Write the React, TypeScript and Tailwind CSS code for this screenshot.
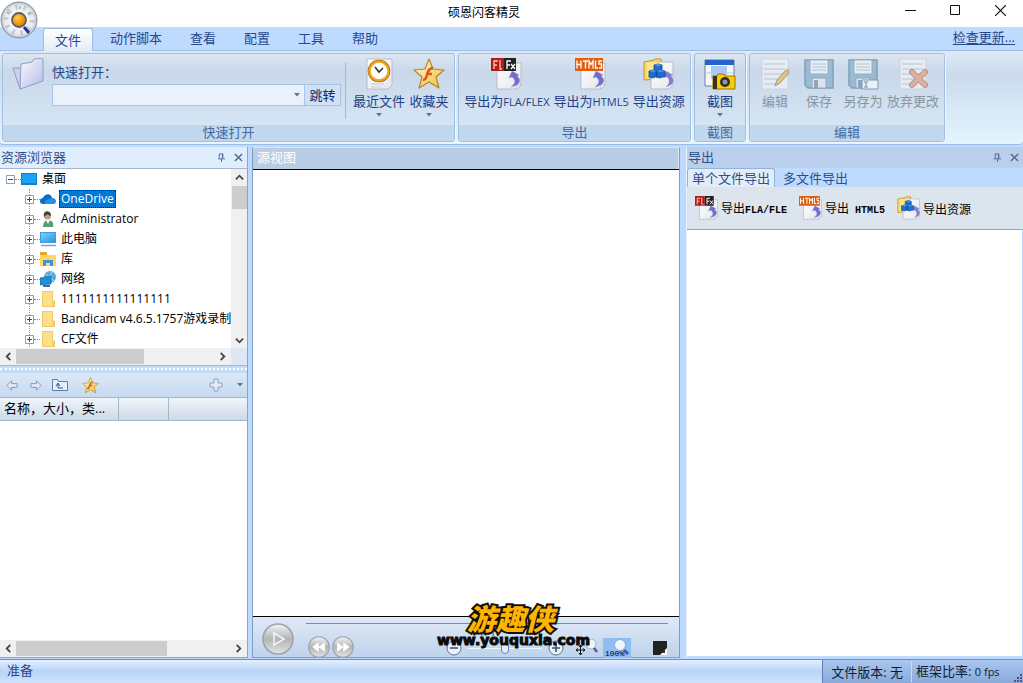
import React from "react";

type IconProps = { className?: string };

const PageShape = () => (
  <>
    <path d="M6 5h24v22l-4 4H6z" fill="url(#paper)" stroke="#b9bcc4" />
    <path d="M30 27h-4v4z" fill="#fff" stroke="#a9adb5" strokeWidth=".7" />
  </>
);

const SwirlArrow = () => (
  <path d="M18 20l3-7 7 4-2 1c5 4 3 9-6 11 5-4 5-7 1-10z" fill="#6f6bc6" stroke="#9d99e2" strokeWidth=".6" />
);

const Defs = () => (
  <svg className="absolute size-0" aria-hidden="true">
    <defs>
      <linearGradient id="paper" x1="0" y1="0" x2="1" y2="1">
        <stop offset="0" stopColor="#fff" />
        <stop offset="1" stopColor="#e4e6ec" />
      </linearGradient>
      <linearGradient id="folder" x1="0" y1="0" x2="1" y2="1">
        <stop offset="0" stopColor="#fafbff" />
        <stop offset="1" stopColor="#b4bae4" />
      </linearGradient>
      <linearGradient id="gold" x1="0" y1="0" x2="1" y2="1">
        <stop offset="0" stopColor="#fffbd0" />
        <stop offset="1" stopColor="#f2bd3c" />
      </linearGradient>
      <linearGradient id="silver" x1="0" y1="0" x2="0" y2="1">
        <stop offset="0" stopColor="#f4f4f4" />
        <stop offset=".5" stopColor="#b2b4b6" />
        <stop offset="1" stopColor="#e2e4e6" />
      </linearGradient>
      <linearGradient id="screen" x1="0" y1="0" x2="1" y2="1">
        <stop offset="0" stopColor="#7fd0fb" />
        <stop offset="1" stopColor="#2696e0" />
      </linearGradient>
      <radialGradient id="orb">
        <stop offset="0" stopColor="#fff" />
        <stop offset=".8" stopColor="#e8ebef" />
        <stop offset="1" stopColor="#b4bcc9" />
      </radialGradient>
      <radialGradient id="amber" cx=".4" cy=".35">
        <stop offset="0" stopColor="#ffd04a" />
        <stop offset="1" stopColor="#f08c00" />
      </radialGradient>
    </defs>
  </svg>
);

const AppLogo = ({ className }: IconProps) => (
  <svg viewBox="0 0 38 38" className={className}>
    <circle cx="19" cy="19" r="18" fill="url(#orb)" stroke="#8791a3" />
    <circle cx="19" cy="19" r="13" fill="none" stroke="#b3bac5" strokeWidth="5" strokeDasharray="2.500 5.670" opacity=".7" />
    <circle cx="19" cy="19" r="10" fill="#f3f5f7" />
    <path d="M24 26l5 6" stroke="#22329c" strokeWidth="3" />
    <circle cx="19" cy="19" r="7" fill="url(#amber)" stroke="#565d6d" strokeWidth="1.800" />
    <path d="M20 5v3M7 11l2 2M30 11l-2 2" stroke="#8fa274" strokeWidth="1.200" />
  </svg>
);

const FoldersIcon = ({ className }: IconProps) => (
  <svg viewBox="0 0 32 32" className={className}>
    <path d="M1 10h9l4 17-6 4z" fill="#c9d1ee" stroke="#8f9bc4" />
    <path d="M9 6l11-2 2-3 8-1 1 2v21L8 31z" fill="url(#folder)" stroke="#8f9bc4" />
  </svg>
);

const RecentIcon = ({ className }: IconProps) => (
  <svg viewBox="0 0 32 32" className={className}>
    <path d="M4 1h25v26l-4 4H4z" fill="url(#paper)" stroke="#b9bcc4" />
    <path d="M8 26h13M8 29h10" stroke="#c9ccd3" />
    <circle cx="16" cy="13" r="9.500" fill="#fff" stroke="#8a5a10" strokeWidth="3.500" />
    <circle cx="16" cy="13" r="9.500" fill="#fff" stroke="#f3a31a" strokeWidth="2.400" />
    <path d="M12 9l4 5 4-4" fill="none" stroke="#333" strokeWidth="1.600" />
  </svg>
);

const StarIcon = ({ className }: IconProps) => (
  <svg viewBox="0 0 32 32" className={className}>
    <path d="M16 1l4 10 11 1-8 7 3 11-10-6-10 6 3-11-8-7 11-1z" fill="url(#gold)" stroke="#ba8422" strokeWidth="1.200" strokeLinejoin="round" />
    <path d="M20 10c-4 0-5 3-6 7s-2 5-4 5M13 16h6" fill="none" stroke="#e0561a" strokeWidth="2.600" />
  </svg>
);

const FlaIcon = ({ className }: IconProps) => (
  <svg viewBox="0 0 32 32" className={className}>
    <PageShape />
    <SwirlArrow />
    <path d="M0 0h13v13H0z" fill="#b5191c" />
    <path d="M13 0h12v13H13z" fill="#222" />
    <path d="M3 11V3h4M3 7h3M9 2v9h2" fill="none" stroke="#ffc8a8" strokeWidth="1.300" />
    <path d="M16 11V3h4M16 7h3M20 6l4 5M24 6l-4 5" fill="none" stroke="#fff" strokeWidth="1.300" />
  </svg>
);

const HtmlIcon = ({ className }: IconProps) => (
  <svg viewBox="0 0 32 32" className={className}>
    <PageShape />
    <SwirlArrow />
    <path d="M0 0h28v13H0z" fill="#df5f10" />
    <path d="M2 2.500v8M6 2.500v8M2 6.500h4M8 3h5M10.500 3v7.500M14 10.500V3l2 3.500L18 3v7.500M20.500 2.500V10H23M27 3h-3v3h2.500v4H24" fill="none" stroke="#fff" strokeWidth="1.300" />
  </svg>
);

const ResourceIcon = ({ className }: IconProps) => (
  <svg viewBox="0 0 32 32" className={className}>
    <path d="M1 4l10-2 1-1h6v20l-17 1z" fill="#f7d967" stroke="#bf9230" />
    <path d="M8 4h22v23l-4 4H8z" fill="url(#paper)" stroke="#b9bcc4" />
    <path d="M4 4h13v15H4z" fill="#fbe48a" />
    <path d="M20 20l3-7 7 4-2 1c4 4 3 9-5 11 4-4 4-7 1-10z" fill="#817ed0" />
    <path d="M11 7l4-1 4 1v5l-4 2-4-1zM6 13l4-1 4 1v5l-4 2-4-1zM13 13l4-1 5 1v5l-5 2-4-1z" fill="#1e6fd0" stroke="#0e439a" strokeWidth=".8" />
    <path d="M11 7l4 1 4-1-4-1zM6 13l4 1 4-1-4-1zM13 13l4 1 5-1-5-1z" fill="#5a9fe8" />
  </svg>
);

const CaptureIcon = ({ className }: IconProps) => (
  <svg viewBox="0 0 32 32" className={className}>
    <path d="M1 2h29v26H1z" fill="#f4f7fc" stroke="#6d80a4" />
    <path d="M1 2h29v5H1z" fill="#2463c8" />
    <path d="M7 8h16v13H7z" fill="#a9c8f8" />
    <path d="M1 15h28" stroke="#bdc9dc" />
    <path d="M9 18h4l1-2h6l1 2h10v13H9z" fill="#f2cf08" stroke="#a17700" />
    <path d="M9 18h4v13H9z" fill="#3c3414" />
    <circle cx="21" cy="24" r="5" fill="#302d27" />
    <circle cx="21" cy="24" r="2.500" fill="#8b96ac" />
  </svg>
);

const NoteLines = () => (
  <>
    <path d="M3 1h26v30H3z" fill="#edf0f5" stroke="#ccd2db" />
    <path d="M5 6h21M5 11h21M5 16h21M5 21h18M5 26h15" stroke="#b9bec7" strokeWidth="1.200" />
  </>
);

const EditIcon = ({ className }: IconProps) => (
  <svg viewBox="0 0 32 32" className={className}>
    <NoteLines />
    <path d="M16 28l2-6 9-10 3 3-9 10z" fill="#e3c167" stroke="#a08c66" />
    <path d="M27 12l3 3 1-2-2-3z" fill="#d9a3a0" />
  </svg>
);

const FloppyShape = () => (
  <>
    <path d="M2 2h28v28H5l-3-3z" fill="#8fb4cd" stroke="#6c93ae" strokeWidth="1.500" />
    <path d="M7 2h18v14H7z" fill="#edf3f7" stroke="#86a5ba" />
    <path d="M9 6h14M9 9h14M9 12h14" stroke="#a9bcc9" />
    <path d="M9 20h14v10H9z" fill="#e0e8ee" stroke="#7b9fb7" />
    <path d="M11 22h4v8h-4z" fill="#8398a7" />
  </>
);

const SaveIcon = ({ className }: IconProps) => (
  <svg viewBox="0 0 32 32" className={className}><FloppyShape /></svg>
);

const SaveAsIcon = ({ className }: IconProps) => (
  <svg viewBox="0 0 32 32" className={className}>
    <FloppyShape />
    <path d="M15 22h16v9H15z" fill="#f1f6fb" stroke="#698ba5" />
    <path d="M17 24h4M17 29h4M19 24v5" stroke="#677988" />
  </svg>
);

const DiscardIcon = ({ className }: IconProps) => (
  <svg viewBox="0 0 32 32" className={className}>
    <NoteLines />
    <path d="M15 14l13 13M28 14L15 27" stroke="#a98479" strokeWidth="6" strokeLinecap="round" />
    <path d="M15 14l13 13M28 14L15 27" stroke="#e2a58c" strokeWidth="4" strokeLinecap="round" />
  </svg>
);

const PinIcon = () => (
  <svg viewBox="0 0 10 10" className="size-[9px]" fill="none" stroke="#4b6694">
    <path d="M2.500 6V1h4v5M1 6.500h8M5 6.500V10M6 1v5" />
  </svg>
);

const CrossIcon = () => (
  <svg viewBox="0 0 10 10" className="size-[9px]" stroke="#4b6694" strokeWidth="1.500">
    <path d="M1 1l8 8M9 1L1 9" />
  </svg>
);

const Caret = ({ className }: IconProps) => (
  <svg viewBox="0 0 6 4" className={`h-1 w-[6px] ${className ?? ""}`}><path d="M0 0h6L3 3.500z" fill="#66758c" /></svg>
);

const Chevron = ({ d }: { d: string }) => (
  <svg viewBox="0 0 10 10" className="size-[9px]" fill="none" stroke="#464646" strokeWidth="2"><path d={d} /></svg>
);
const UP = "M1 7l4-4 4 4";
const DOWN = "M1 3l4 4 4-4";
const LEFT = "M7 1L3 5l4 4";
const RIGHT = "M3 1l4 4-4 4";

type Tool = { label: string; latin?: string; Icon: (p: IconProps) => React.ReactElement; caret?: boolean; disabled?: boolean };

function ToolButton({ label, latin, Icon, caret, disabled }: Tool) {
  return (
    <button disabled={disabled} className={`flex min-w-10 shrink-0 flex-col items-center whitespace-nowrap pt-1 ${disabled ? "text-[#8a949f]" : "text-[#1e3f86]"}`}>
      <Icon className={`size-8 ${disabled ? "opacity-80" : ""}`} />
      <span className="mt-[3px] leading-4">{label}{latin && <span className="text-[11px]">{latin}</span>}</span>
      {caret && <Caret className="mt-1" />}
    </button>
  );
}

function Group({ title, className = "", children }: { title: string; className?: string; children: React.ReactNode }) {
  return (
    <section className={`flex shrink-0 flex-col overflow-hidden rounded-[3px] border border-[#a3bfdf] bg-linear-to-b from-[#dce6f2] via-[#c9d8ea] via-20% to-[#d9e9f7] shadow-[1px_1px_0_#edf6ff] ${className}`}>
      <div className="flex flex-1 items-start justify-center gap-1 px-[5px]">{children}</div>
      <h2 className="h-4 bg-[#c0d8ef] text-center leading-[15px] text-[#4668a0]">{title}</h2>
    </section>
  );
}

const exportTools: Tool[] = [
  { label: "导出为", latin: "FLA/FLEX", Icon: FlaIcon },
  { label: "导出为", latin: "HTML5", Icon: HtmlIcon },
  { label: "导出资源", Icon: ResourceIcon },
];
const editTools: Tool[] = [
  { label: "编辑", Icon: EditIcon, disabled: true },
  { label: "保存", Icon: SaveIcon, disabled: true },
  { label: "另存为", Icon: SaveAsIcon, disabled: true },
  { label: "放弃更改", Icon: DiscardIcon, disabled: true },
];

function TitleBar() {
  return (
    <header className="flex h-[27px] shrink-0 bg-white pl-[42px]">
      <h1 className="flex-1 pl-[38px] text-center text-xs leading-[25px] text-black">硕恩闪客精灵</h1>
      <button aria-label="最小化" className="flex w-[45px] items-center justify-center pb-[6px]"><svg className="h-3 w-[11px]" viewBox="0 0 11 12" stroke="#111"><path d="M0 5.500h11" /></svg></button>
      <button aria-label="最大化" className="flex w-[45px] items-center justify-center pb-[6px]"><svg className="size-[11px]" viewBox="0 0 11 11" fill="none" stroke="#111"><path d="M.5.5h9v9h-9z" /></svg></button>
      <button aria-label="关闭" className="flex w-[45px] items-center justify-center pb-[6px]"><svg className="size-[11px]" viewBox="0 0 11 11" fill="none" stroke="#111" strokeWidth="1.200"><path d="M0 0l11 11M11 0L0 11" /></svg></button>
    </header>
  );
}

function MenuTabs() {
  return (
    <nav className="flex h-6 shrink-0 items-end border-b border-[#9dbce3] bg-[#bfdaff] pl-[43px] text-[#26488c]">
      <button className="-mb-px h-[23px] rounded-t-[3px] border border-b-0 border-[#9dbce3] bg-linear-to-b from-white to-[#e2edf9] px-[11px] leading-5">文件</button>
      <div className="flex gap-7 pl-[17px] leading-6">
        {["动作脚本", "查看", "配置", "工具", "帮助"].map((t) => <button key={t}>{t}</button>)}
      </div>
      <a href="#update" className="ml-auto self-start pr-2 leading-5 underline underline-offset-2">检查更新...</a>
    </nav>
  );
}

function Ribbon() {
  return (
    <div className="flex h-[94px] shrink-0 gap-[3px] overflow-hidden rounded-b border-b border-[#9dbce3] bg-linear-to-b from-[#dfe9f5] via-[#cbdbed] via-25% to-[#e4f5ff] px-[2px] pt-[2px] pb-[2px]">
      <Group title="快速打开" className="w-[453px]">
        <FoldersIcon className="mt-1 ml-1 size-8 shrink-0" />
        <div className="min-w-0 flex-1 pt-2 pl-1">
          <label htmlFor="quick" className="block leading-5 text-[#26488c]">快速打开：</label>
          <div className="mt-[2px] flex h-[22px] border border-[#a9c3e2]">
            <div className="flex min-w-0 flex-1 items-center bg-[#e9f1fb] pr-1">
              <input id="quick" className="h-full min-w-0 flex-1 bg-transparent px-1 outline-none" />
              <Caret />
            </div>
            <button className="w-9 border-l border-[#a9c3e2] bg-[#d0e1f5] leading-[18px] text-[#0f2a70]">跳转</button>
          </div>
        </div>
        <span className="mt-[9px] mr-[3px] h-14 w-px shrink-0 bg-[#9fb9d8]" />
        <ToolButton label="最近文件" Icon={RecentIcon} caret />
        <ToolButton label="收藏夹" Icon={StarIcon} caret />
      </Group>
      <Group title="导出" className="w-[233px]">{exportTools.map((t) => <ToolButton key={t.label + t.latin} {...t} />)}</Group>
      <Group title="截图" className="w-[52px]"><ToolButton label="截图" Icon={CaptureIcon} caret /></Group>
      <Group title="编辑">{editTools.map((t) => <ToolButton key={t.label} {...t} />)}</Group>
    </div>
  );
}

function PanelTitle({ title, tone }: { title: string; tone: string }) {
  return (
    <div className={`flex h-[21px] shrink-0 items-center gap-2 pr-1 pl-px ${tone}`}>
      <h2 className="flex-1 pb-[2px] leading-[18px] text-[#2c4f8e]">{title}</h2>
      <button aria-label="固定面板"><PinIcon /></button>
      <button aria-label="关闭面板"><CrossIcon /></button>
    </div>
  );
}

const svg16 = (children: React.ReactNode) => <svg viewBox="0 0 16 16" className="size-4 shrink-0">{children}</svg>;
const folderGlyph = svg16(<><path d="M2 0h11v10h2v6H2z" fill="#ffe08a" /><path d="M12 10h3v6h-3z" fill="#f7d06c" /><path d="M2.500 16V.500h10V10h2v5.500h-12" fill="none" stroke="#efc968" /></>);
const desktopGlyph = svg16(<><path d="M0 2h16v12H0z" fill="#0d80cf" /><path d="M1 3h14v9H1z" fill="#18a3f6" /></>);

const nodes = [
  { label: "OneDrive", icon: svg16(<><path d="M3 13a3 3 0 010-6c2-5 8-5 9 0 5 0 5 6 1 6z" fill="#0f6cc2" /><path d="M6 13c-2 0-2-3 1-4l4-2c4 0 6 4 3 6z" fill="#2493e4" /></>) },
  { label: "Administrator", icon: svg16(<><path d="M3 16c0-4 2-7 5-7 4 0 6 3 5 7z" fill="#5a9b78" /><path d="M6 9l2 4 2-4z" fill="#fff" /><circle cx="7.500" cy="5" r="3.500" fill="#c99f80" /><path d="M4 6c-2-8 8-7 7-1L7 3.500z" fill="#4a4140" /></>) },
  { label: "此电脑", icon: svg16(<><path d="M0 1h16v11H0z" fill="#3d9be0" /><path d="M1 2h14v9H1z" fill="url(#screen)" /><path d="M1 14.500h15" stroke="#8aa2b4" strokeWidth="1.500" /></>) },
  { label: "库", icon: svg16(<><path d="M0 2h6l2 2h8v11H0z" fill="#ffd766" /><path d="M0 1h7v3H0z" fill="#dfa92e" /><path d="M3 9h10v6h-3v-3H6v3H3z" fill="#4791d6" /></>) },
  { label: "网络", icon: svg16(<><circle cx="10" cy="6" r="6" fill="#5aabd8" /><path d="M6 3l8 7M12 1L7 10" stroke="#b4e0f2" /><path d="M0 7l11-2v8L0 14z" fill="#1b8fda" stroke="#1768a4" strokeWidth=".7" /><path d="M3 14h7v2H3z" fill="#38749b" /></>) },
  { label: "1111111111111111", icon: folderGlyph },
  { label: "Bandicam v4.6.5.1757游戏录制", icon: folderGlyph },
  { label: "CF文件", icon: folderGlyph },
];

function Toggle({ open }: { open?: boolean }) {
  return (
    <button aria-label={open ? "折叠" : "展开"} className="shrink-0 bg-white">
      <svg viewBox="0 0 9 9" className="size-[9px]" fill="none"><path d="M.5.5h8v8h-8z" stroke="#8f9bb0" /><path d={open ? "M2 4.500h5" : "M2 4.500h5M4.500 2v5"} stroke="#344b7c" /></svg>
    </button>
  );
}

function HScroll({ thumb, corner }: { thumb: string; corner?: boolean }) {
  return (
    <div className="flex h-[17px] shrink-0 bg-[#f0f0f0]">
      <button aria-label="向左滚动" className="flex w-4 items-center justify-center"><Chevron d={LEFT} /></button>
      <div className="flex flex-1 items-center"><div className={`h-[15px] bg-[#cdcdcd] ${thumb}`} /></div>
      <button aria-label="向右滚动" className="flex w-[18px] items-center justify-center"><Chevron d={RIGHT} /></button>
      {corner && <span className="w-4 bg-[#dce9f5]" />}
    </div>
  );
}

function Explorer() {
  return (
    <aside className="flex w-[248px] shrink-0 flex-col border-r border-b border-[#8ba5c7] bg-white">
      <PanelTitle title="资源浏览器" tone="bg-[#e0edfc]" />
      <div className="flex h-[180px] shrink-0 border-t border-[#a7b6ca]">
        <div className="min-w-0 flex-1 overflow-hidden text-xs text-black">
          <div className="flex h-5 items-center pl-[6px]">
            <Toggle open />
            <span className="w-[6px] border-t border-dotted border-[#888]" />
            {desktopGlyph}
            <span className="pl-[5px] leading-[18px]">桌面</span>
          </div>
          <ul className="ml-[29px] border-l border-dotted border-[#999]">
            {nodes.map((n, i) => (
              <li key={n.label} className="-ml-[5px] flex h-5 items-center whitespace-nowrap">
                <Toggle />
                <span className="w-[6px] shrink-0 border-t border-dotted border-[#888]" />
                {n.icon}
                <button className={`ml-[3px] px-[2px] leading-[18px] ${i === 0 ? "bg-[#0078d7] text-white outline-1 -outline-offset-1 outline-dotted outline-[#222]" : ""}`}>{n.label}</button>
              </li>
            ))}
          </ul>
        </div>
        <div className="flex w-4 flex-col items-center bg-[#f0f0f0]">
          <button aria-label="向上滚动" className="flex h-[17px] items-center"><Chevron d={UP} /></button>
          <div className="h-[23px] w-[15px] bg-[#cdcdcd]" />
          <button aria-label="向下滚动" className="mt-auto flex h-4 items-center"><Chevron d={DOWN} /></button>
        </div>
      </div>
      <HScroll thumb="w-[65%]" corner />
      <div className="h-2 shrink-0 border-t border-[#a7b6ca] bg-[#c4dcf8] pt-[2px]"><div className="border-t-2 border-dotted border-white" /></div>
      <div className="flex h-6 shrink-0 items-center gap-[10px] bg-linear-to-b from-[#dce8f7] to-[#c8daf0] pr-1 pl-[6px]">
        <button aria-label="后退"><svg viewBox="0 0 14 14" className="size-[13px]" fill="#e5edf8" stroke="#7893bd"><path d="M1 7l5-5v3h6v4H6v3z" /></svg></button>
        <button aria-label="前进"><svg viewBox="0 0 14 14" className="size-[13px]" fill="#e5edf8" stroke="#7893bd"><path d="M13 7L8 2v3H2v4h6v3z" /></svg></button>
        <button aria-label="上级目录"><svg viewBox="0 0 16 14" className="h-[14px] w-4" fill="#e5eff9" stroke="#5c80b0"><path d="M.5 12.500v-11h5l1 2h9v9z" /><path d="M6 6v4h5M4 8l2-3 2 3" fill="none" stroke="#2d5492" /></svg></button>
        <button aria-label="收藏" className="ml-1"><StarIcon className="size-[17px]" /></button>
        <button aria-label="添加" className="mr-1 ml-auto"><svg viewBox="0 0 14 14" className="size-[14px]" fill="#e5edf8" stroke="#8ca2c3"><path d="M5 1h4v4h4v4H9v4H5V9H1V5h4z" /></svg></button>
        <button aria-label="更多"><Caret /></button>
      </div>
      <table className="h-6 w-full table-fixed border-y border-[#a5b5ca] bg-linear-to-b from-[#f1f5fa] to-[#ccd9e8] text-left text-black">
        <thead>
          <tr>
            <th className="w-[118px] border-r border-[#a5b5ca] pl-1 font-normal whitespace-nowrap">名称，大小，类...</th>
            <th className="w-[50px] border-r border-[#a5b5ca]" />
            <th />
          </tr>
        </thead>
      </table>
      <div className="flex-1" />
      <HScroll thumb="w-[71%]" />
    </aside>
  );
}

function RoundButton({ label, size, path, box }: { label: string; size: string; path: string; box: string }) {
  return (
    <button aria-label={label} className="shrink-0">
      <svg viewBox={box} className={size}>
        <circle cx="16" cy="16" r="15" fill="url(#silver)" stroke="#9da1a7" strokeWidth="1.500" />
        <path d={path} fill={label === "播放" ? "none" : "#fff"} stroke="#fff" strokeWidth="1.300" />
      </svg>
    </button>
  );
}

function ZoomGlyph({ plus }: { plus?: boolean }) {
  return (
    <svg viewBox="0 0 16 16" className="size-4" fill="none">
      <circle cx="8" cy="8" r="7" fill="#eaf1fa" stroke="#61748f" />
      <path d={plus ? "M4 8h8M8 4v8" : "M4 8h8"} stroke="#3d5171" strokeWidth="1.600" />
    </svg>
  );
}

function Viewer() {
  return (
    <main className="relative flex min-w-0 flex-1 flex-col border border-t-[#d4e6fa] border-[#7f9cc4] bg-white">
      <h2 className="h-[21px] shrink-0 border-r border-[#dceafa] bg-[#b9cde6] pl-1 leading-[19px] text-white">源视图</h2>
      <div className="flex-1 border-y border-black" />
      <div className="flex h-10 shrink-0 gap-3 bg-linear-to-b from-[#dfe9f5] to-[#bfd3ed] pr-[11px] pl-[9px]">
        <RoundButton label="播放" size="mt-1 size-8" box="0 0 32 32" path="M12 10l10 6-10 6zM12 10v12" />
        <div className="min-w-0 flex-1 pt-[6px]">
          <div className="border-t border-[#6b8dc0]" />
          <div className="h-2 text-center text-xs leading-4 text-[#26488c]">1/1</div>
          <div className="flex h-[22px] items-center pr-px pl-[2px]">
            <div className="mt-2 flex gap-[2px]">
              <RoundButton label="快退" size="size-[22px]" box="0 0 32 32" path="M15 10v12l-8-6zM24 10v12l-8-6z" />
              <RoundButton label="快进" size="size-[22px]" box="0 0 32 32" path="M8 10v12l8-6zM17 10v12l8-6z" />
            </div>
            <div className="mt-[10px] ml-auto flex items-center">
              <button aria-label="缩小"><ZoomGlyph /></button>
              <input aria-label="缩放" type="range" defaultValue="50" className="mx-[6px] h-4 w-[74px] appearance-none bg-transparent [&::-webkit-slider-runnable-track]:h-px [&::-webkit-slider-runnable-track]:bg-[#eff6ff] [&::-webkit-slider-thumb]:-mt-[5px] [&::-webkit-slider-thumb]:h-[11px] [&::-webkit-slider-thumb]:w-2 [&::-webkit-slider-thumb]:appearance-none [&::-webkit-slider-thumb]:rounded-b-full [&::-webkit-slider-thumb]:border [&::-webkit-slider-thumb]:border-[#5e81b6] [&::-webkit-slider-thumb]:bg-[#e4eefb]" />
              <button aria-label="放大"><ZoomGlyph plus /></button>
              <button aria-label="适应窗口" className="ml-3"><svg viewBox="0 0 24 18" className="h-[18px] w-6" fill="none"><circle cx="15" cy="5" r="5" fill="#eef4fa" stroke="#a3b4c9" /><path d="M18 9l3 4" stroke="#535f8d" strokeWidth="2.500" /><path d="M0 11h9M4.500 6v10M3 8l1.500-2L6 8M3 14l1.500 2L6 14M2 9.500L0 11l2 1.500M7 9.500L9 11l-2 1.500" stroke="#111" /></svg></button>
              <button aria-label="实际大小" className="relative ml-[3px] h-5 w-7 bg-[#8fbdf4]">
                <svg viewBox="0 0 28 20" className="h-5 w-7"><circle cx="17" cy="7" r="5.500" fill="#f0f6fc" stroke="#91aac8" /><path d="M21 12l4 4" stroke="#4058ac" strokeWidth="3" /></svg>
                <span className="absolute bottom-0 left-[2px] font-['Liberation_Mono'] text-[8px] leading-[9px] text-black">100%</span>
              </button>
              <button aria-label="背景颜色" className="ml-[22px]"><svg viewBox="0 0 14 14" className="size-[14px]"><path d="M0 0h14v14H0z" fill="#222" /><path d="M14 7v7H7z" fill="#fff" /><path d="M8 12h4V8z" fill="#333" /></svg></button>
            </div>
          </div>
        </div>
      </div>
      <div className="pointer-events-none absolute right-[88px] bottom-[9px] flex w-[155px] flex-col items-center">
        <span className="pr-[6px] font-['Noto_Sans_CJK_SC',sans-serif] text-[29px] leading-8 font-black italic text-[#ffb400] [-webkit-text-stroke:4px_#111] [paint-order:stroke_fill]">游趣侠</span>
        <span className="font-['DejaVu_Sans',sans-serif] text-[14px] leading-[15px] font-bold text-[#0a0a0a] [-webkit-text-stroke:1px_#0a0a0a]">www.youquxia.com</span>
      </div>
    </main>
  );
}

function ExportPanel() {
  const items: Tool[] = [
    { label: "导出", latin: "FLA/FLE", Icon: FlaIcon },
    { label: "导出", latin: " HTML5", Icon: HtmlIcon },
    { label: "导出资源", Icon: ResourceIcon },
  ];
  return (
    <aside className="flex w-[337px] shrink-0 flex-col border-l border-[#e6f2ff] bg-[#bfdaff] pb-[2px]">
      <PanelTitle title="导出" tone="bg-[#b9cfeb]" />
      <div className="flex h-[19px] shrink-0 text-[#2c4f8e]">
        <button className="rounded-t-[3px] border border-b-0 border-[#93b2dc] bg-[#e4edf7] px-1 leading-4">单个文件导出</button>
        <button className="px-2 leading-4">多文件导出</button>
      </div>
      <div className="flex h-[43px] shrink-0 items-center gap-3 border-b border-[#8da6c4] bg-[#dce5ed] pl-2 text-xs text-black">
        {items.map(({ label, latin, Icon }) => (
          <button key={label + latin} className="flex items-center gap-[2px] whitespace-nowrap">
            <Icon className="size-6" />
            <span className="pt-1 leading-5">{label}{latin && <span className="font-['Liberation_Mono',monospace] text-[10px] font-bold whitespace-pre">{latin}</span>}</span>
          </button>
        ))}
      </div>
      <div className="mr-px flex-1 bg-white" />
    </aside>
  );
}

export default function App() {
  return (
    <div className="relative flex h-screen min-h-[560px] flex-col overflow-hidden bg-[#bfdaff] font-['Open_Sans','Noto_Sans_CJK_SC',sans-serif] text-[13px]">
      <Defs />
      <TitleBar />
      <MenuTabs />
      <button aria-label="应用菜单" className="absolute top-px left-0"><AppLogo className="size-[38px]" /></button>
      <Ribbon />
      <div className="mt-[2px] flex min-h-0 flex-1">
        <Explorer />
        <span className="w-1 shrink-0" />
        <Viewer />
        <span className="w-[6px] shrink-0" />
        <ExportPanel />
      </div>
      <footer className="mt-px flex h-6 shrink-0 border-t border-[#6d8fbd] bg-linear-to-b from-[#e3efff] via-[#b9d4f7] via-50% to-[#cfe2fb] leading-5 text-[#26488c]">
        <span className="flex-1 pl-[7px]">准备</span>
        <div className="flex items-center border-l border-[#5e80b2] bg-linear-to-b from-[#a9c6ee] to-[#88abdc] text-[#101c34]">
          <span className="px-2">文件版本: 无</span>
          <span className="w-28 border-l border-[#c9ddf7] pl-1">框架比率: <span className="text-[11px]">0 fps</span></span>
        </div>
        <svg viewBox="0 0 10 10" className="absolute right-0 bottom-0 size-[10px]" fill="#557"><path d="M7 1h2v2H7zM4 4h2v2H4zM7 4h2v2H7zM1 7h2v2H1zM4 7h2v2H4zM7 7h2v2H7z" /></svg>
      </footer>
    </div>
  );
}
